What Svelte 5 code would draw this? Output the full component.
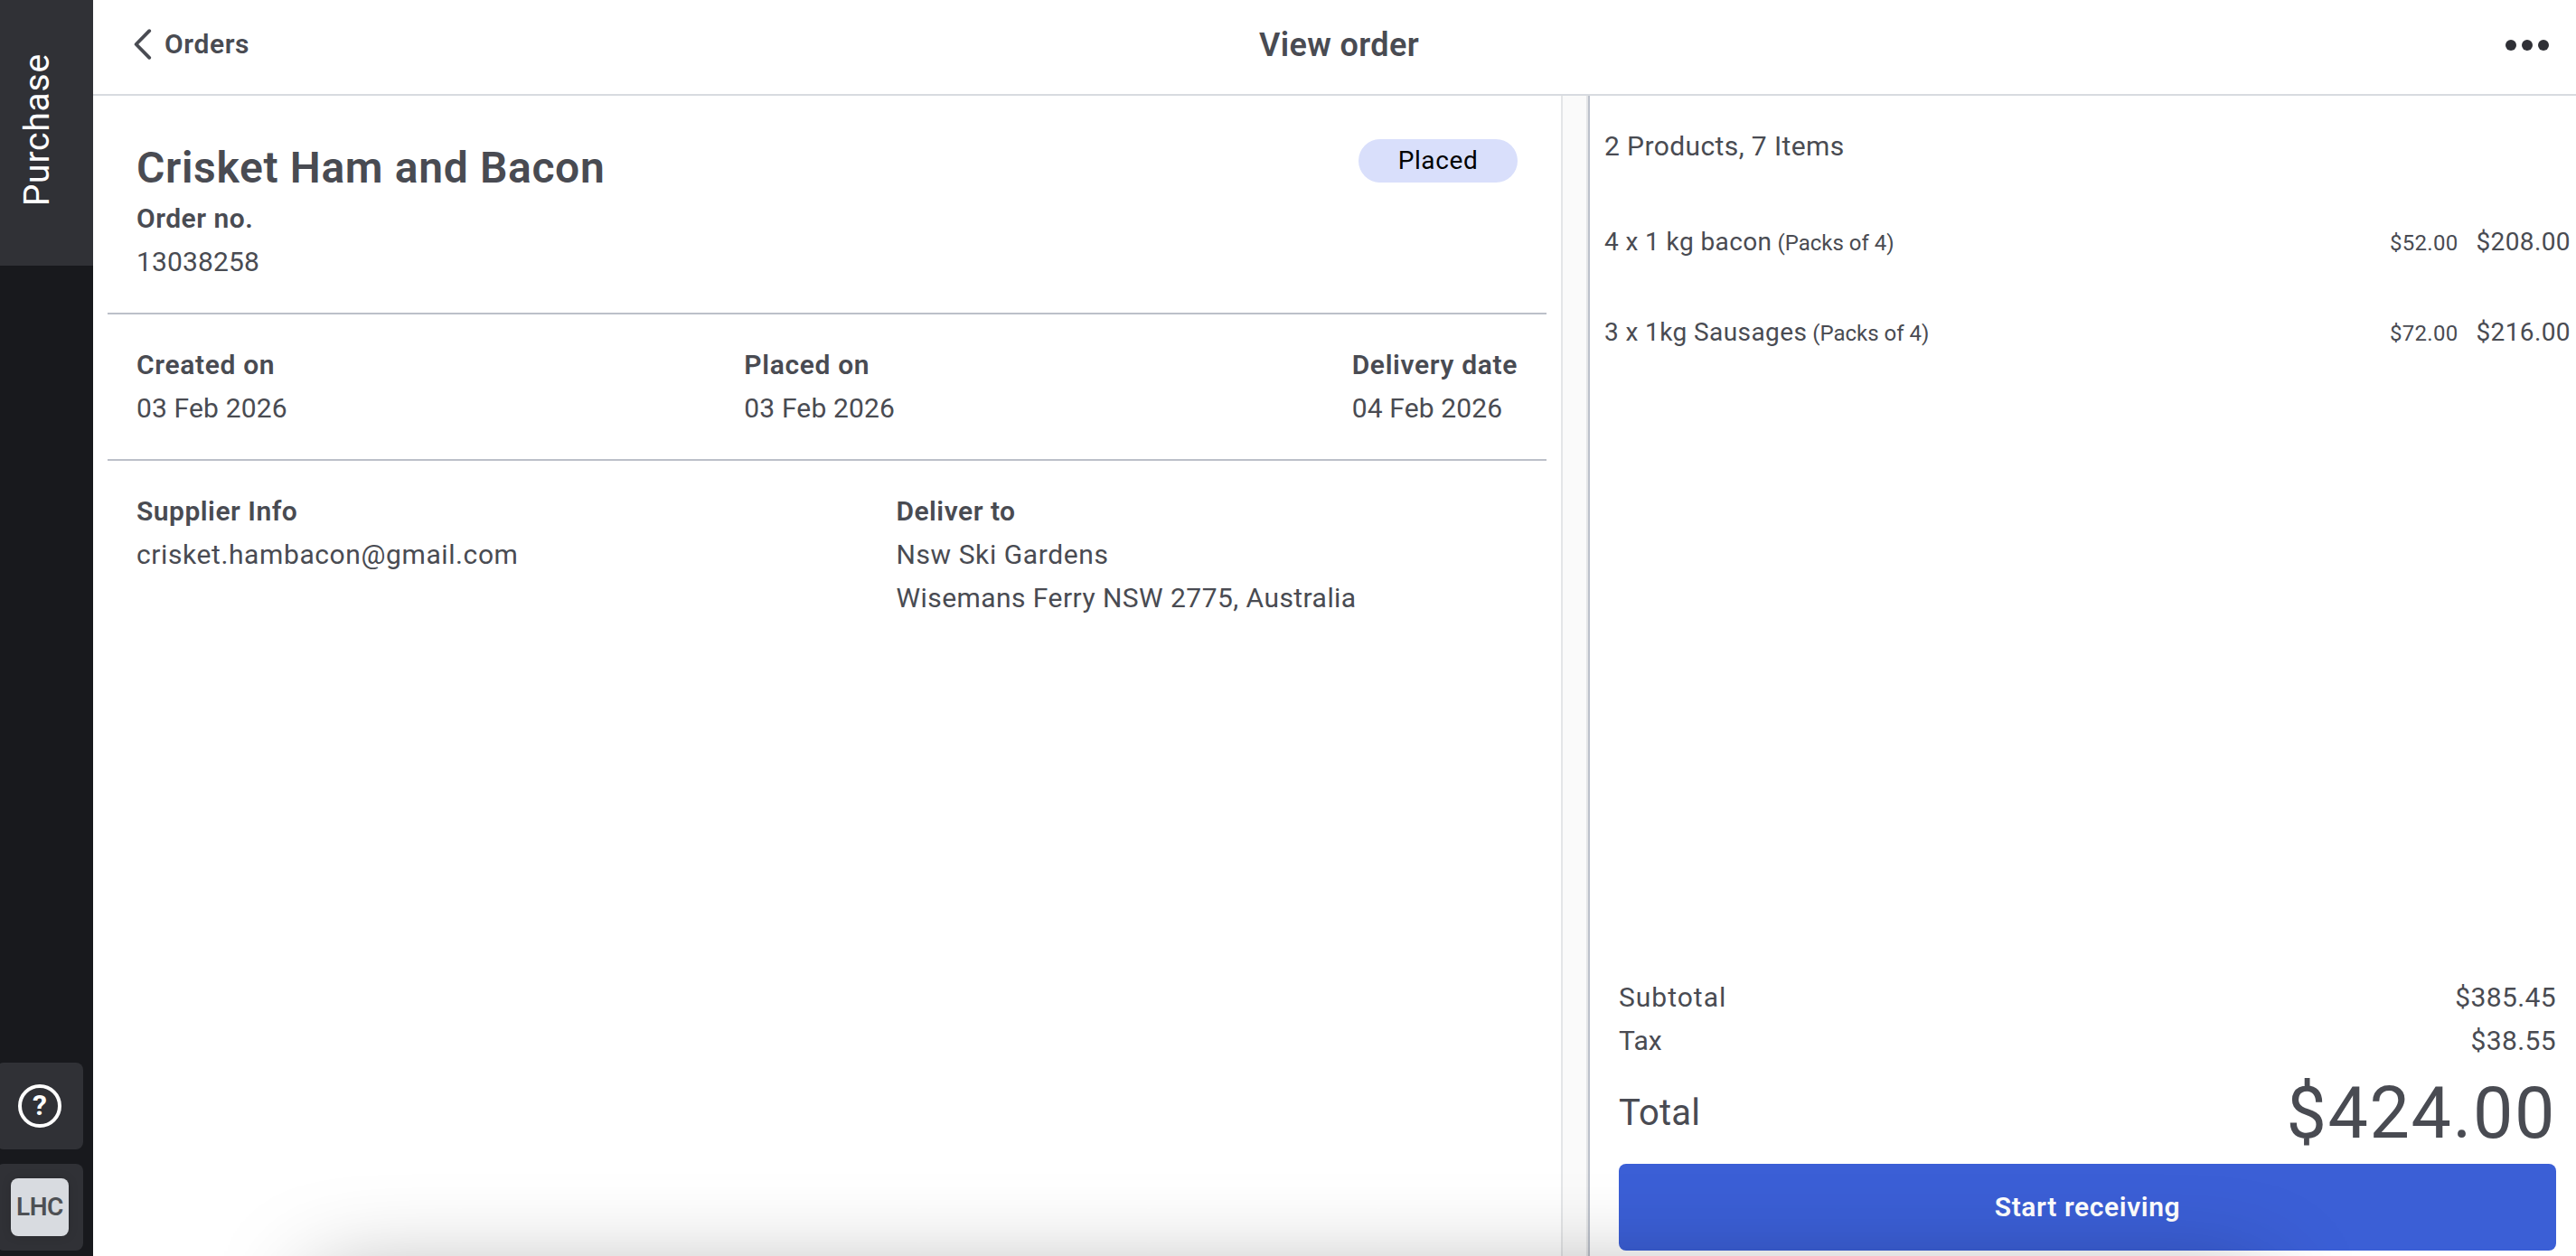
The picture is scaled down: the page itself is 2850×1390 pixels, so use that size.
<script lang="ts">
  interface LineItem {
    id: number;
    quantity: number;
    name: string;
    pack: string;
    unitPrice: string;
    total: string;
  }

  const dates = [
    { label: 'Created on', value: '03 Feb 2026' },
    { label: 'Placed on', value: '03 Feb 2026' },
    { label: 'Delivery date', value: '04 Feb 2026' },
  ];

  const items: LineItem[] = [
    { id: 1, quantity: 4, name: '1 kg bacon', pack: 'Packs of 4', unitPrice: '$52.00', total: '$208.00' },
    { id: 2, quantity: 3, name: '1kg Sausages', pack: 'Packs of 4', unitPrice: '$72.00', total: '$216.00' },
  ];
</script>

<div class="app">
  <nav class="sidebar">
    <div class="section-tab"><span>Purchase</span></div>
    <div class="sidebar-actions">
      <button class="sidebar-button" type="button" aria-label="Help">
        <span class="help-icon">?</span>
      </button>
      <button class="sidebar-button" type="button">
        <span class="avatar">LHC</span>
      </button>
    </div>
  </nav>

  <div class="page">
    <header class="topbar">
      <button class="back" type="button">
        <svg width="20" height="34" viewBox="0 0 20 34" aria-hidden="true">
          <path
            d="M17.2 2.2 L2.6 17 L17.2 31.8"
            fill="none"
            stroke="currentColor"
            stroke-width="3.8"
            stroke-linecap="round"
            stroke-linejoin="round"
          />
        </svg>
        <span>Orders</span>
      </button>
      <h1 class="page-title">View order</h1>
      <button class="more" type="button" aria-label="More">
        <i></i><i></i><i></i>
      </button>
    </header>

    <div class="content">
      <main class="details">
        <section class="block heading">
          <div>
            <h2 class="supplier">Crisket Ham and Bacon</h2>
            <div class="label">Order no.</div>
            <div class="number">13038258</div>
          </div>
          <span class="badge">Placed</span>
        </section>

        <section class="block dates">
          {#each dates as date (date.label)}
            <div>
              <div class="label">{date.label}</div>
              <div class="number">{date.value}</div>
            </div>
          {/each}
        </section>

        <section class="block parties">
          <div>
            <div class="label">Supplier Info</div>
            <div>crisket.hambacon@gmail.com</div>
          </div>
          <div>
            <div class="label">Deliver to</div>
            <div>Nsw Ski Gardens</div>
            <div class="address">Wisemans Ferry NSW 2775, Australia</div>
          </div>
        </section>
      </main>

      <div class="gutter"></div>

      <aside class="summary">
        <div class="count">2 Products, 7 Items</div>
        <ul class="items">
          {#each items as item (item.id)}
            <li class="item">
              <span class="item-name">{item.quantity} x {item.name}</span>
              <span class="pack">({item.pack})</span>
              <span class="unit-price">{item.unitPrice}</span>
              <span class="item-total">{item.total}</span>
            </li>
          {/each}
        </ul>

        <div class="totals">
          <div class="row">
            <span class="subtotal">Subtotal</span>
            <span class="price">$385.45</span>
          </div>
          <div class="row">
            <span class="number">Tax</span>
            <span class="price">$38.55</span>
          </div>
          <div class="row grand">
            <span class="number">Total</span>
            <span class="amount">$424.00</span>
          </div>
          <button class="primary" type="button">Start receiving</button>
        </div>
      </aside>
    </div>
  </div>

  <div class="sheet-shadow"></div>
</div>

<style>
  :global(body) {
    margin: 0;
    background: #fff;
  }

  .app {
    position: relative;
    display: flex;
    width: 2850px;
    height: 1390px;
    overflow: hidden;
    background: #fff;
    color: #494b52;
    font-family: Roboto, 'Liberation Sans', sans-serif;
    font-size: 30px;
    line-height: 48px;
    letter-spacing: 0.6px;
  }

  button {
    padding: 0;
    border: none;
    background: none;
    color: inherit;
    font: inherit;
    letter-spacing: inherit;
    cursor: pointer;
  }

  .sidebar {
    display: flex;
    flex-direction: column;
    justify-content: space-between;
    width: 103px;
    flex-shrink: 0;
    background: #18191d;
  }

  .section-tab {
    display: flex;
    align-items: center;
    justify-content: center;
    height: 294px;
    padding: 0 21px 6px 0;
    box-sizing: border-box;
    background: #303136;
    color: #fff;
  }

  .section-tab span {
    writing-mode: vertical-rl;
    transform: rotate(180deg);
    font-size: 39px;
    letter-spacing: 0.8px;
  }

  .sidebar-actions {
    display: flex;
    flex-direction: column;
    gap: 16px;
    padding-bottom: 6px;
  }

  .sidebar-button {
    display: flex;
    align-items: center;
    justify-content: center;
    width: 96px;
    height: 96px;
    margin-left: -4px;
    border-radius: 8px;
    background: #303136;
  }

  .help-icon {
    display: flex;
    align-items: center;
    justify-content: center;
    width: 48px;
    height: 48px;
    padding-bottom: 2px;
    box-sizing: border-box;
    border: 4px solid #fff;
    border-radius: 50%;
    color: #fff;
    font-size: 32px;
    font-weight: 700;
    letter-spacing: 0;
  }

  .avatar {
    width: 64px;
    height: 64px;
    border-radius: 8px;
    background: #d8dbe0;
    box-shadow: 0 0 12px rgba(0, 0, 0, 0.12);
    color: #4d5054;
    font-size: 28px;
    font-weight: 600;
    line-height: 64px;
    letter-spacing: -0.5px;
  }

  .page {
    display: flex;
    flex-direction: column;
    flex: 1;
    min-width: 0;
  }

  .topbar {
    display: grid;
    grid-template-columns: 1fr auto 1fr;
    height: 106px;
    padding: 0 30px 0 45px;
    box-sizing: border-box;
    border-bottom: 2px solid #d8dbe0;
  }

  .back {
    display: flex;
    align-items: center;
    gap: 14px;
    height: 98px;
    font-weight: 600;
  }

  .page-title {
    margin: 0 5px 0 0;
    font-size: 36px;
    font-weight: 600;
    line-height: 100px;
    letter-spacing: 0.4px;
  }

  .more {
    display: flex;
    align-items: center;
    justify-self: end;
    gap: 6px;
    height: 100px;
  }

  .more i {
    width: 12px;
    height: 12px;
    border-radius: 50%;
    background: #2f3036;
  }

  .content {
    display: flex;
    flex: 1;
  }

  .details {
    width: 1592px;
    padding: 0 16px;
  }

  .block {
    padding: 32px;
    border-bottom: 2px solid #bcc0c9;
  }

  .block:last-child {
    border-bottom: none;
  }

  .heading {
    display: flex;
    justify-content: space-between;
    align-items: flex-start;
    padding-top: 48px;
  }

  .supplier {
    margin: 0;
    font-size: 48px;
    font-weight: 600;
    line-height: 64px;
    letter-spacing: 0.65px;
  }

  .label {
    font-weight: 600;
    letter-spacing: 0.5px;
  }

  .dates .label {
    letter-spacing: 0.65px;
  }

  .number {
    letter-spacing: 0.15px;
  }

  .badge {
    width: 176px;
    height: 48px;
    border-radius: 24px;
    background: #d9dffb;
    color: #000;
    font-size: 28px;
    text-align: center;
  }

  .dates {
    display: flex;
    justify-content: space-between;
  }

  .parties {
    display: grid;
    grid-template-columns: 55% 45%;
  }

  .address {
    letter-spacing: 0.45px;
  }

  .gutter {
    width: 26px;
    flex-shrink: 0;
    border: solid #e4e5e7;
    border-width: 0 2px;
    background: #fafafa;
  }

  .summary {
    display: flex;
    flex-direction: column;
    flex: 1;
    border-left: 2px solid #bcc1cb;
  }

  .count {
    padding: 32px 16px 0;
    letter-spacing: 0.4px;
  }

  .items {
    margin: 32px 0 0;
    padding: 0;
    list-style: none;
  }

  .item {
    display: flex;
    align-items: baseline;
    height: 100px;
    padding: 0 6px 0 16px;
    box-sizing: border-box;
    font-size: 28px;
    line-height: 100px;
    letter-spacing: 0.4px;
  }

  .pack {
    margin-left: 6px;
    font-size: 24px;
    letter-spacing: 0;
  }

  .unit-price {
    margin-left: auto;
    font-size: 24px;
    letter-spacing: 0.25px;
  }

  .item-total {
    margin-left: 20px;
  }

  .totals {
    margin-top: auto;
    padding: 0 22px 6px 32px;
  }

  .row {
    display: flex;
    justify-content: space-between;
  }

  .subtotal {
    letter-spacing: 1px;
  }

  .price {
    letter-spacing: 0.4px;
  }

  .grand {
    align-items: center;
    height: 112px;
    font-size: 40px;
  }

  .amount {
    font-size: 79px;
    letter-spacing: 1.6px;
  }

  .primary {
    display: block;
    width: 100%;
    height: 96px;
    border-radius: 8px;
    background: #3b5fd6;
    color: #fff;
    font-weight: 600;
  }

  /* Shadow cast upwards by the sheet docked under the window */
  .sheet-shadow {
    position: absolute;
    top: 1420px;
    left: 350px;
    width: 2150px;
    height: 200px;
    box-shadow: 0 0 110px rgba(0, 0, 0, 0.38);
    pointer-events: none;
  }
</style>
